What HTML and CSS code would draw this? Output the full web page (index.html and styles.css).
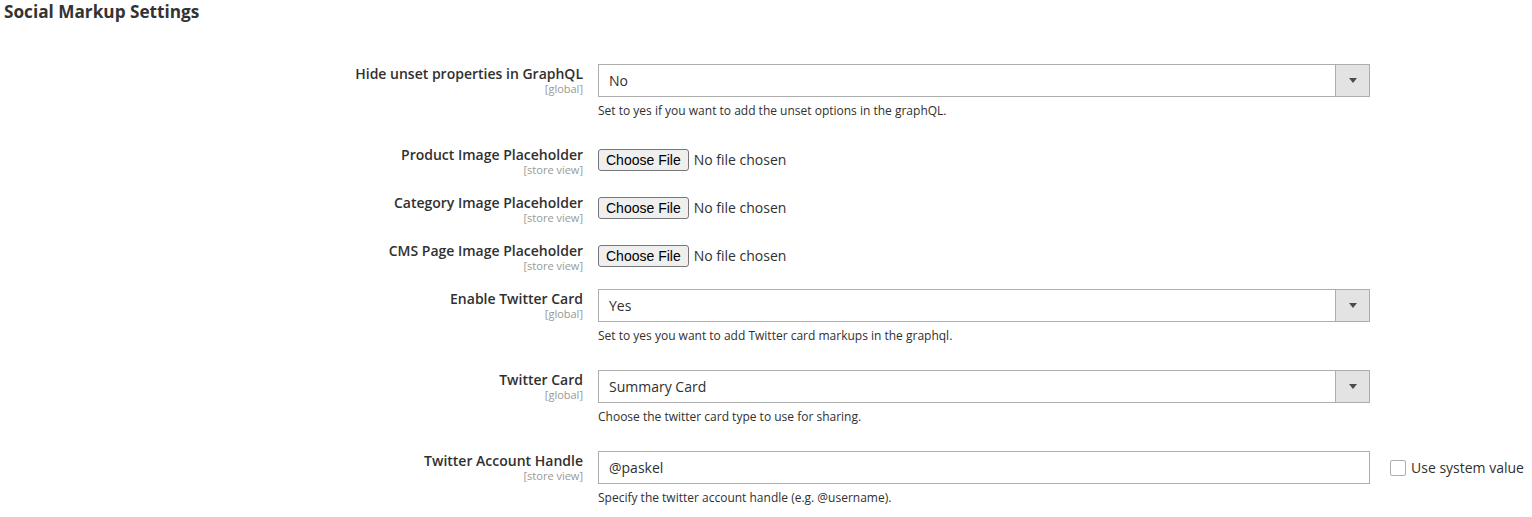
FILE: index.html
```html
<!DOCTYPE html>
<html lang="en">
<head>
<meta charset="utf-8">
<title>Social Markup Settings</title>
<link rel="stylesheet" href="styles.css">
</head>
<body>
<div class="page">
  <h2 class="section-title">Social Markup Settings</h2>
  <div class="form">
    <div class="row">
      <div class="label"><span class="label-text">Hide unset properties in GraphQL</span><span class="scope">[global]</span></div>
      <div class="control">
        <div class="select"><span class="select-value">No</span><span class="select-action"><span class="arrow"></span></span></div>
        <p class="note">Set to yes if you want to add the unset options in the graphQL.</p>
      </div>
    </div>
    <div class="row">
      <div class="label"><span class="label-text">Product Image Placeholder</span><span class="scope">[store view]</span></div>
      <div class="control control-file"><input class="file" type="file"></div>
    </div>
    <div class="row">
      <div class="label"><span class="label-text">Category Image Placeholder</span><span class="scope">[store view]</span></div>
      <div class="control control-file"><input class="file" type="file"></div>
    </div>
    <div class="row">
      <div class="label"><span class="label-text">CMS Page Image Placeholder</span><span class="scope">[store view]</span></div>
      <div class="control control-file"><input class="file" type="file"></div>
    </div>
    <div class="row">
      <div class="label"><span class="label-text">Enable Twitter Card</span><span class="scope">[global]</span></div>
      <div class="control">
        <div class="select"><span class="select-value">Yes</span><span class="select-action"><span class="arrow"></span></span></div>
        <p class="note">Set to yes you want to add Twitter card markups in the graphql.</p>
      </div>
    </div>
    <div class="row">
      <div class="label"><span class="label-text">Twitter Card</span><span class="scope">[global]</span></div>
      <div class="control">
        <div class="select"><span class="select-value">Summary Card</span><span class="select-action"><span class="arrow"></span></span></div>
        <p class="note">Choose the twitter card type to use for sharing.</p>
      </div>
    </div>
    <div class="row">
      <div class="label"><span class="label-text">Twitter Account Handle</span><span class="scope">[store view]</span></div>
      <div class="control">
        <div class="text-input">@paskel</div>
        <p class="note">Specify the twitter account handle (e.g. @username).</p>
      </div>
      <label class="use-default"><span class="checkbox"></span><span>Use system value</span></label>
    </div>
  </div>
</div>
</body>
</html>
```

FILE: styles.css
```css
* { box-sizing: border-box; }
html, body { margin: 0; padding: 0; background: #fff; }
body {
  font-family: "Open Sans", "Noto Sans", sans-serif;
  color: #303030;
  font-size: 14px;
}
.page { padding: 0 0 0 4px; }
.section-title {
  margin: 0;
  font-size: 17.2px;
  font-weight: 700;
  line-height: 24px;
  color: #333333;
}
.form { padding-top: 40px; }
.row {
  display: grid;
  grid-template-columns: 579px 772px auto;
  column-gap: 15px;
  padding-bottom: 17px;
}
.label {
  display: flex;
  flex-direction: column;
  align-items: flex-end;
  text-align: right;
}
.label-text {
  font-weight: 600;
  font-size: 14px;
  line-height: 20px;
}
.scope {
  margin-top: -1px;
  font-size: 11px;
  line-height: 12px;
  color: #999999;
}
.control { min-width: 0; }
.control-file { padding-top: 4px; }
.select {
  height: 33px;
  border: 1px solid #adadad;
  display: flex;
  align-items: stretch;
  background: #fff;
}
.select-value {
  flex: 1;
  padding: 0 10px;
  line-height: 31px;
  font-size: 14px;
}
.select-action {
  width: 34px;
  background: #e3e3e3;
  border-left: 1px solid #adadad;
  display: flex;
  align-items: center;
  justify-content: center;
}
.arrow {
  width: 0;
  height: 0;
  border-left: 4px solid transparent;
  border-right: 4px solid transparent;
  border-top: 5px solid #514943;
}
.text-input {
  height: 33px;
  border: 1px solid #adadad;
  padding: 0 10px;
  line-height: 31px;
  font-size: 14px;
}
.note {
  margin: 6px 0 9px;
  font-size: 12px;
  line-height: 16px;
}
.file {
  font-family: "Open Sans", "Noto Sans", sans-serif;
  font-size: 14px;
  color: #303030;
  height: 22px;
}
.file::file-selector-button {
  font-family: "Liberation Sans", Arial, sans-serif;
  font-size: 14px;
  line-height: 16px;
  height: 22px;
  padding: 2px 7px;
  margin-right: 5px;
  color: #000;
  background: #efefef;
  border: 1px solid #767676;
  border-radius: 3px;
}
.use-default {
  margin-left: 5px;
  display: flex;
  align-items: center;
  height: 33px;
  gap: 5px;
  font-size: 14px;
  white-space: nowrap;
}
.checkbox {
  width: 16px;
  height: 16px;
  border: 1px solid #adadad;
  border-radius: 2px;
  background: #fff;
}
```
